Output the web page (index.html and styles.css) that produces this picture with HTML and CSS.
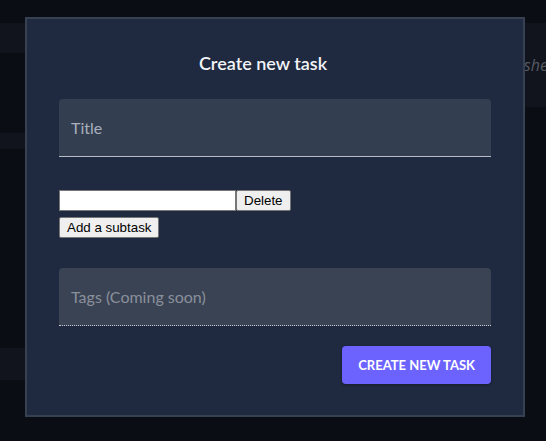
FILE: index.html
```html
<!DOCTYPE html>
<html lang="en">
<head>
<meta charset="utf-8">
<title>Create new task</title>
<link rel="stylesheet" href="styles.css">
</head>
<body>
<div class="page">
  <header class="topbar">
    <h1 class="page-title">What Happened Today</h1>
  </header>
  <div class="columns">
    <section class="col col-left">
      <div class="band band-a"></div>
      <div class="band band-b"></div>
      <div class="band band-c"></div>
    </section>
    <section class="col col-right">
      <div class="band band-r">
        <p class="empty">Nothing finished yet</p>
      </div>
    </section>
  </div>
</div>

<div class="overlay">
  <form class="dialog">
    <h2 class="dialog-title">Create new task</h2>
    <div class="field">
      <span class="field-label">Title</span>
    </div>
    <div class="subtasks">
      <div class="subtask-row">
        <input class="native-input" type="text">
        <button class="native-btn" type="button">Delete</button>
      </div>
      <button class="native-btn" type="button">Add a subtask</button>
    </div>
    <div class="field field-disabled">
      <span class="field-label">Tags (Coming soon)</span>
    </div>
    <div class="actions">
      <button class="primary-btn" type="button">Create new task</button>
    </div>
  </form>
</div>
</body>
</html>
```
FILE: styles.css
```css
html, body {
  margin: 0;
  padding: 0;
}
body {
  background: #0a0d14;
  font-family: "Lato", "Open Sans", sans-serif;
  width: 546px;
  height: 441px;
  overflow: hidden;
}
.page {
  display: flex;
  flex-direction: column;
}
.topbar {
  height: 23px;
  display: flex;
  overflow: hidden;
}
.page-title {
  margin: -29px 0 0 0;
  padding-left: 447px;
  font-size: 30px;
  line-height: 30px;
  font-weight: 400;
  color: #8d929b;
  white-space: nowrap;
}
.columns {
  display: grid;
  grid-template-columns: minmax(0, 1fr) minmax(0, 1fr);
}
.col {
  display: flex;
  flex-direction: column;
  min-width: 0;
  overflow: hidden;
}
.band {
  background: #11141c;
}
.band-a { height: 30px; }
.band-b { height: 16px; margin-top: 80px; }
.band-c { height: 32px; margin-top: 199px; }
.band-r {
  height: 84px;
  display: flex;
  align-items: center;
}
.empty {
  margin: 0;
  padding-left: 168px;
  font-family: "Open Sans", sans-serif;
  font-style: italic;
  font-size: 16px;
  color: #555a64;
  white-space: nowrap;
}

.overlay {
  position: fixed;
  inset: 0;
  padding: 17px 0 0 25px;
}
.dialog {
  box-sizing: border-box;
  width: 500px;
  height: 400px;
  background: #1f2940;
  border: 2px solid #384152;
  padding: 0 32px;
  display: flex;
  flex-direction: column;
}
.dialog-title {
  margin: 32px 0 0 0;
  padding-right: 24px;
  height: 24px;
  line-height: 24px;
  text-align: center;
  font-size: 18px;
  font-weight: 600;
  color: #f2f4f7;
}
.field {
  margin-top: 24px;
  height: 58px;
  box-sizing: border-box;
  background: #343e51;
  border-radius: 4px 4px 0 0;
  border-bottom: 1px solid #b8bcc4;
  display: flex;
  align-items: center;
  padding: 0 12px;
}
.field-label {
  font-size: 16px;
  color: #a9b0bc;
}
.field-disabled {
  margin-top: 30px;
  background: #3a4354;
  border-bottom: 1px dotted #c6cad1;
}
.field-disabled .field-label {
  color: #8a909b;
}
.subtasks {
  margin-top: 33px;
  display: flex;
  flex-direction: column;
  align-items: flex-start;
  gap: 6px;
}
.subtask-row {
  display: flex;
  height: 21px;
}
.native-input {
  box-sizing: border-box;
  width: 177px;
  height: 21px;
  margin: 0;
  padding: 1px 2px;
  border: 1px solid #767676;
  background: #ffffff;
  font-family: "Liberation Sans", Arial, sans-serif;
  font-size: 13.33px;
}
.native-btn {
  box-sizing: border-box;
  height: 21px;
  margin: 0;
  padding: 1px 7px;
  border: 1px solid #767676;
  border-radius: 2px;
  background: #efefef;
  color: #000000;
  font-family: "Liberation Sans", Arial, sans-serif;
  font-size: 13.33px;
  line-height: 15px;
}
.actions {
  margin-top: 20px;
  display: flex;
  justify-content: flex-end;
}
.primary-btn {
  height: 38px;
  padding: 0 16px;
  border: none;
  border-radius: 4px;
  background: #6c63ff;
  color: #ffffff;
  font-family: "Lato", sans-serif;
  font-size: 13px;
  font-weight: 700;
  text-transform: uppercase;
  box-shadow: 0 1px 3px rgba(0,0,0,0.3);
}
```
